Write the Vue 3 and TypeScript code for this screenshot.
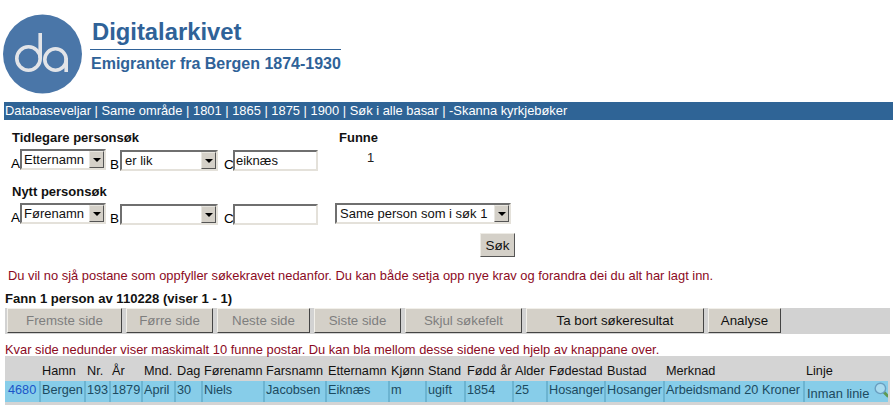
<script setup lang="ts">
interface Pager { label: string; width: number; disabled: boolean }
const pagers: Pager[] = [
  { label: 'Fremste side', width: 115, disabled: true },
  { label: 'Førre side', width: 87, disabled: true },
  { label: 'Neste side', width: 93, disabled: true },
  { label: 'Siste side', width: 87, disabled: true },
  { label: 'Skjul søkefelt', width: 117, disabled: true },
  { label: 'Ta bort søkeresultat', width: 178, disabled: false },
  { label: 'Analyse', width: 73, disabled: false },
]
const cols: [string, string, number][] = [
  ['', '4680', 36], ['Hamn', 'Bergen', 45], ['Nr.', '193', 25], ['År', '1879', 32],
  ['Mnd.', 'April', 33], ['Dag', '30', 27], ['Førenamn', 'Niels', 62], ['Farsnamn', 'Jacobsen', 62],
  ['Etternamn', 'Eiknæs', 63], ['Kjønn', 'm', 37], ['Stand', 'ugift', 39], ['Fødd år', '1854', 48],
  ['Alder', '25', 34], ['Fødestad', 'Hosanger', 58], ['Bustad', 'Hosanger', 59], ['Merknad', 'Arbeidsmand 20 Kroner', 140],
]
const nav = 'Databaseveljar | Same område | 1801 | 1865 | 1875 | 1900 | Søk i alle basar | -Skanna kyrkjebøker'
</script>

<template>
  <div class="page">
    <header class="head">
      <svg class="logo" width="79" height="80" viewBox="0 0 79 80" aria-label="da">
        <circle cx="39.5" cy="40" r="39.5" fill="#4a76a8" />
        <g fill="none" stroke="#e2e4e8" stroke-width="3.6">
          <circle cx="25.5" cy="44.5" r="11.7" />
          <path d="M37.2 19V44.5" />
          <circle cx="52.5" cy="45.5" r="10.7" />
          <path d="M63.2 44V58" />
        </g>
      </svg>
      <div class="titles">
        <h1>Digitalarkivet</h1>
        <h2>Emigranter fra Bergen 1874-1930</h2>
      </div>
    </header>
    <nav class="nav">{{ nav }}</nav>

    <section class="form">
      <div class="heads first"><b class="h-left">Tidlegare personsøk</b><b>Funne</b></div>
      <div class="line">
        <span class="lt">A</span><div class="sel s-a"><span>Etternamn</span><i class="arrow"></i></div>
        <span class="lt lb">B</span><div class="sel s-b"><span>er lik</span><i class="arrow"></i></div>
        <span class="lt lc">C</span><div class="inp"><span>eiknæs</span></div>
        <span class="count">1</span>
      </div>
      <div class="heads second"><b>Nytt personsøk</b></div>
      <div class="line">
        <span class="lt">A</span><div class="sel s-a"><span>Førenamn</span><i class="arrow"></i></div>
        <span class="lt lb">B</span><div class="sel s-b"><span></span><i class="arrow"></i></div>
        <span class="lt lc">C</span><div class="inp"><span></span></div>
        <div class="sel s-same"><span>Same person som i søk 1</span><i class="arrow"></i></div>
      </div>
      <div class="sok-row"><button class="sok" type="button">Søk</button></div>
    </section>

    <p class="msg m1">Du vil no sjå postane som oppfyller søkekravet nedanfor. Du kan både setja opp nye krav og forandra dei du alt har lagt inn.</p>
    <p class="found">Fann 1 person av 110228 (viser 1 - 1)</p>
    <div class="bar">
      <button v-for="p in pagers" :key="p.label" type="button" class="pg" :class="{ off: p.disabled }" :style="{ width: p.width + 'px' }">{{ p.label }}</button>
    </div>
    <p class="msg m2">Kvar side nedunder viser maskimalt 10 funne postar. Du kan bla mellom desse sidene ved hjelp av knappane over.</p>

    <div class="tbl">
      <div class="row thead">
        <span v-for="c in cols" :key="'h' + c[1]" class="cell" :style="{ width: c[2] + 'px' }">{{ c[0] }}</span>
        <span class="cell last">Linje</span>
      </div>
      <div class="row tbody">
        <span v-for="(c, i) in cols" :key="'d' + c[1]" class="cell" :class="{ link: i === 0 }" :style="{ width: c[2] + 'px' }">{{ c[1] }}</span>
        <span class="cell last linje">
          <span class="inman">Inman linie</span>
          <svg class="glass" width="16" height="16" viewBox="0 0 16 16" aria-hidden="true">
            <path d="M9.5 9.8l4 4" stroke="#5f9a55" stroke-width="3" stroke-linecap="round" />
            <circle cx="6.4" cy="6.4" r="5.2" fill="#a9dbef" stroke="#6a9fc0" stroke-width="1.4" />
          </svg>
        </span>
      </div>
    </div>
  </div>
</template>

<style scoped>
.page { width: 895px; height: 410px; overflow: hidden; font-family: "Liberation Sans", Arial, sans-serif; font-size: 12px; color: #111; background: #fff; position: relative; }
.head { display: flex; height: 102px; padding: 14px 0 0 3px; box-sizing: border-box; }
.logo { flex: none; }
.titles { margin-left: 8px; width: 251px; }
h1 { margin: 4px 0 0 2px; font-size: 23.8px; line-height: 28px; font-weight: 700; color: #2f6298; height: 31px; border: 0; }
h2 { margin: 0; padding: 4px 0 0 1px; border-top: 1px solid #2f6298; font-size: 16px; line-height: 19px; font-weight: 700; color: #2f6298; white-space: nowrap; }
.nav { margin: 0 2px 0 4px; height: 18px; line-height: 18px; background: #2f6496; color: #fff; font-size: 12.9px; white-space: nowrap; padding-left: 1px; }
.form { padding: 0 0 0 11px; height: 148px; box-sizing: border-box; }
.heads { display: flex; font-size: 13px; line-height: 15px; padding-left: 1px; }
.first { padding-top: 10px; height: 30px; box-sizing: border-box; }
.h-left { width: 327px; }
.second { padding-top: 11px; height: 31px; margin-top: 1px; box-sizing: border-box; }
.line { display: flex; align-items: flex-start; height: 22px; }
.lt { font-size: 13.5px; width: 9px; line-height: 15px; padding-top: 6px; flex: none; color: #000; }
.lb { width: 10px; margin-left: 4px; padding-top: 7px; }
.lc { width: 9px; margin-left: 6px; padding-top: 7px; }
.sel, .inp { display: flex; align-items: center; box-sizing: border-box; background: #fff; border: 2px solid; border-color: #6f6f6f #e4e1da #e4e1da #6f6f6f; font-size: 13px; flex: none; overflow: hidden; white-space: nowrap; }
.s-a { width: 86px; height: 21px; padding-left: 2px; margin-top: -1px; }
.s-b { width: 98px; height: 21px; padding-left: 3px; }
.inp { width: 85px; height: 21px; padding-left: 1px; }
.s-same { width: 176px; height: 21px; padding-left: 3px; margin-left: 17px; margin-top: -1px; }
.sel span { flex: 1; min-width: 0; }
.arrow { flex: none; width: 15px; height: 17px; box-sizing: border-box; background: #d4d0c8; border: 1px solid; border-color: #e8e6e0 #555 #555 #e8e6e0; position: relative; }
.arrow::after { content: ""; position: absolute; left: 3px; top: 6px; border: 4px solid transparent; border-top: 4px solid #000; border-bottom: 0; }
.count { margin-left: 49px; font-size: 13px; line-height: 15px; color: #222; }
.sok-row { padding: 7px 0 0 469px; }
.sok { display: block; width: 35px; height: 24px; padding: 0; background: #d4d0c8; border: 1px solid; border-color: #eeece6 #555 #555 #eeece6; font: 13.5px "Liberation Sans", Arial, sans-serif; color: #111; }
.msg { margin: 0; color: #8b0a1e; font-size: 12.9px; line-height: 15px; white-space: nowrap; }
.m1 { padding-left: 8px; height: 22px; }
.found { margin: 1px 0 0; padding-left: 5px; height: 17px; font-size: 13.1px; line-height: 15px; font-weight: 700; color: #111; }
.bar { display: flex; gap: 4px; margin-left: 5px; width: 885px; height: 26px; box-sizing: border-box; padding: 0 2px; background: #d2d2d2; }
.pg { height: 25px; padding: 0; background: #d4d0c8; border: 1px solid; border-color: #f2f0ea #444 #444 #f2f0ea; font: 13.3px "Liberation Sans", Arial, sans-serif; color: #111; white-space: nowrap; flex: none; }
.pg.off { color: #7e7e7e; }
.m2 { padding-left: 5px; margin-top: 8px; height: 14px; }
.tbl { margin: 0 0 0 5px; width: 885px; height: 49px; background: #d4d4d4; }
.row { display: flex; white-space: nowrap; font-size: 12.7px; }
.thead { height: 25px; line-height: 30px; }
.tbody { height: 21px; line-height: 19px; width: 883px; color: #1c4a60; }
.cell { box-sizing: border-box; padding-left: 1px; flex: none; overflow: hidden; }
.tbody .cell { background: #87cde9; border-right: 2px solid #6cb4d1; height: 21px; }
.tbody .last { border-right: 0; padding-left: 2px; }
.last { flex: 1; }
.tbody .link { color: #1b55c8; padding-left: 3px; }
.linje { display: flex; align-items: flex-start; padding-top: 3px; }
.inman { line-height: 19px; font-size: 12.9px; }
.glass { margin-left: 5px; margin-top: -2px; flex: none; }
</style>
